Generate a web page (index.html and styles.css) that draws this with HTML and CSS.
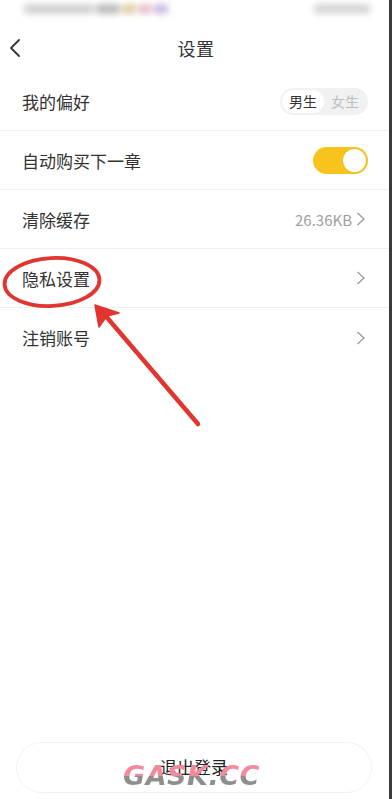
FILE: index.html
```html
<!DOCTYPE html>
<html lang="zh">
<head>
<meta charset="utf-8">
<title>设置</title>
<link rel="stylesheet" href="styles.css">
</head>
<body>
<div class="screen">
  <div class="statusbar">
    <div class="blur-left">
      <span class="b b1"></span><span class="b b2"></span><span class="b b3"></span><span class="b b4"></span><span class="b b5"></span>
    </div>
    <div class="blur-right"></div>
  </div>
  <div class="header">
    <svg class="back" width="12" height="20" viewBox="0 0 12 20"><path d="M10 2 L2 10 L10 18" fill="none" stroke="#333" stroke-width="1.8" stroke-linecap="round" stroke-linejoin="round"/></svg>
    <div class="title">设置</div>
  </div>
  <div class="list">
    <div class="row">
      <span class="label">我的偏好</span>
      <div class="seg"><span class="seg-item on">男生</span><span class="seg-item">女生</span></div>
    </div>
    <div class="row">
      <span class="label">自动购买下一章</span>
      <div class="switch"><span class="knob"></span></div>
    </div>
    <div class="row nav">
      <span class="label">清除缓存</span>
      <div class="right"><span class="value">26.36KB</span><svg class="chev" width="10" height="16" viewBox="0 0 10 16"><path d="M1.5 2 L8 8 L1.5 14" fill="none" stroke="#999" stroke-width="1.3"/></svg></div>
    </div>
    <div class="row nav">
      <span class="label">隐私设置</span>
      <div class="right"><svg class="chev" width="10" height="16" viewBox="0 0 10 16"><path d="M1.5 2 L8 8 L1.5 14" fill="none" stroke="#999" stroke-width="1.3"/></svg></div>
    </div>
    <div class="row nav last">
      <span class="label">注销账号</span>
      <div class="right"><svg class="chev" width="10" height="16" viewBox="0 0 10 16"><path d="M1.5 2 L8 8 L1.5 14" fill="none" stroke="#999" stroke-width="1.3"/></svg></div>
    </div>
  </div>
  <div class="spacer"></div>
  <div class="footer">
    <div class="logout">退出登录</div>
  </div>
  <svg class="annot" width="392" height="799" viewBox="0 0 392 799">
    <ellipse cx="52" cy="282" rx="47.5" ry="24" transform="rotate(-3 52 282)" fill="none" stroke="#e0362f" stroke-width="3.8"/>
    <path d="M198 424 L104 314" stroke="#e0362f" stroke-width="4.5" stroke-linecap="round"/>
    <path d="M95 305 L119 313 L107 316 L99 327 Z" fill="#e0362f" stroke="#e0362f" stroke-width="1.5" stroke-linejoin="round"/>
  </svg>
  <div class="watermark">GASK.CC</div>
  <div class="edge"></div>
</div>
</body>
</html>
```
FILE: styles.css
```css
* { box-sizing: border-box; }
html, body { margin: 0; padding: 0; }
body {
  font-family: "Noto Sans CJK SC", "Noto Sans", sans-serif;
  background: #fff;
  color: #333;
}
.screen {
  position: relative;
  width: 392px;
  height: 799px;
  overflow: hidden;
  display: flex;
  flex-direction: column;
  background: #fff;
}
.statusbar {
  height: 24px;
  display: flex;
  justify-content: space-between;
  align-items: center;
  padding: 0 22px 6px 24px;
}
.blur-left { display: flex; gap: 2px; filter: blur(3px); align-items: center; }
.b { display: block; height: 10px; border-radius: 3px; }
.b1 { width: 70px; background: #d2d2d2; }
.b2 { width: 24px; background: #bdbdbd; }
.b3 { width: 14px; background: #ddd2a4; }
.b4 { width: 14px; background: #e8c2d0; }
.b5 { width: 14px; background: #cdbce3; }
.blur-right { width: 56px; height: 10px; border-radius: 3px; background: #d6d6d6; filter: blur(3px); }
.header {
  position: relative;
  height: 48px;
  display: flex;
  align-items: center;
  justify-content: center;
}
.back { position: absolute; left: 9px; top: 14px; }
.title { font-size: 18px; color: #333; letter-spacing: 0.5px; }
.list { display: flex; flex-direction: column; }
.row {
  height: 59px;
  display: flex;
  align-items: center;
  justify-content: space-between;
  padding: 0 24px 0 22px;
  border-bottom: 1px solid #efefef;
}
.row.nav { padding-right: 26px; }
.row.last { border-bottom: none; }
.label { font-size: 17px; color: #333; }
.seg {
  display: flex;
  align-items: center;
  width: 88px;
  height: 27px;
  border-radius: 14px;
  background: #f1f1f1;
  padding: 0 2px;
}
.seg-item {
  flex: 1;
  height: 23px;
  line-height: 23px;
  text-align: center;
  font-size: 14px;
  color: #bdbdbd;
  border-radius: 12px;
}
.seg-item.on { background: #fff; color: #333; }
.switch {
  width: 55px;
  height: 27px;
  border-radius: 14px;
  background: #f7c31c;
  display: flex;
  align-items: center;
  justify-content: flex-end;
  padding: 2px;
}
.knob {
  width: 23px;
  height: 23px;
  border-radius: 50%;
  background: #fff;
  box-shadow: 0 0 1px rgba(150,120,0,0.4);
}
.right { display: flex; align-items: center; gap: 4px; }
.value { font-size: 15px; color: #a0a0a0; }
.chev { display: block; }
.spacer { flex: 1; }
.footer { padding: 0 20px 6px 16px; }
.logout {
  height: 51px;
  border: 1px solid #f2f2f2;
  border-radius: 26px;
  display: flex;
  align-items: center;
  justify-content: center;
  font-size: 17px;
  color: #222;
  padding-bottom: 2px;
}
.annot { position: absolute; left: 0; top: 0; pointer-events: none; }
.watermark {
  position: absolute;
  left: 123px;
  top: 761px;
  font-family: "DejaVu Sans", sans-serif;
  font-weight: bold;
  font-style: italic;
  font-size: 27px;
  line-height: 30px;
  letter-spacing: 0.5px;
  background: linear-gradient(to bottom, #f18a9c 0%, #f18a9c 50%, #8e8e8e 50%, #8e8e8e 100%);
  -webkit-background-clip: text;
  background-clip: text;
  color: transparent;
  pointer-events: none;
}
.edge {
  position: absolute;
  right: 0;
  top: 0;
  width: 3px;
  height: 799px;
  background: #3a3a3a;
}
```
